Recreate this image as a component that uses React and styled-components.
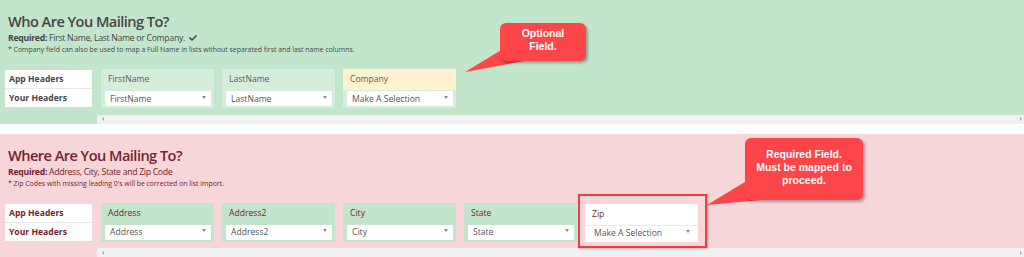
import styled, { createGlobalStyle } from "styled-components";
import { FaCheck } from "react-icons/fa";

const GlobalStyle = createGlobalStyle`
  html, body {
    margin: 0;
    padding: 0;
    background: #ffffff;
  }
  body {
    font-family: "Open Sans", "Liberation Sans", sans-serif;
    width: 1024px;
    height: 257px;
    overflow: hidden;
  }
`;

const Page = styled.div`
  position: relative;
  width: 1024px;
  height: 257px;
  display: flex;
  flex-direction: column;
  gap: 10px;
`;

const Section = styled.section`
  background: ${(p) => (p.danger ? "#f6d6d9" : "#c3e5cb")};
  color: ${(p) => (p.danger ? "#74242b" : "#454545")};
  display: flex;
  flex-direction: column;
  padding-top: 12px;
`;

const Intro = styled.div`
  padding-left: 8px;
`;

const Title = styled.h2`
  margin: 0;
  font-size: 14.6px;
  line-height: 19px;
  font-weight: 600;
  letter-spacing: -0.55px;
`;

const Required = styled.div`
  margin-top: 1px;
  font-size: 8.7px;
  line-height: 12px;
  letter-spacing: -0.3px;
  display: flex;
  align-items: center;
  gap: 4px;

  b {
    font-weight: 700;
  }
`;

const Note = styled.div`
  font-size: 6.9px;
  line-height: 10px;
  margin-top: 1px;
`;

const Row = styled.div`
  display: flex;
  align-items: flex-start;
  padding-left: 5px;
  margin-top: 14px;
  height: 39px;
`;

const Labels = styled.div`
  width: 87px;
  background: #ffffff;
  display: flex;
  flex-direction: column;
  margin-top: 1px;
  margin-right: 9px;
`;

const LabelCell = styled.div`
  height: 18px;
  line-height: 18px;
  padding-left: 4px;
  font-size: 8.6px;
  font-weight: 700;
  & + & {
    border-top: 1px solid #e8e8e8;
  }
`;

const Cards = styled.div`
  display: flex;
  gap: 8px;
`;

const Card = styled.div`
  width: 113px;
  height: ${(p) => (p.tall ? 38 : 39)}px;
  box-sizing: border-box;
  background: ${(p) => p.bg};
  display: flex;
  flex-direction: column;
  padding: 0 3px 2px 4px;
  margin-top: ${(p) => (p.tall ? 1 : 0)}px;
`;

const CardHead = styled.div`
  height: 21px;
  line-height: 21px;
  font-size: 8.6px;
  color: ${(p) => p.color};
  background: ${(p) => p.headBg || "transparent"};
  margin: 0 -3px 0 -4px;
  padding-left: 7px;
  border-bottom: ${(p) => (p.line ? "1px solid #ececec" : "none")};
`;

const Select = styled.div`
  flex: 1;
  background: #ffffff;
  display: flex;
  align-items: center;
  justify-content: space-between;
  padding: 0 5px;
  font-size: 8.6px;
  color: #555555;
  margin-top: 1px;

  &::after {
    content: "";
    border-left: 2.5px solid transparent;
    border-right: 2.5px solid transparent;
    border-top: 3px solid #8a8a8a;
    margin-top: -3px;
  }
`;

const ScrollBar = styled.div`
  margin-top: auto;
  margin-left: 97px;
  height: 9px;
  background: #f1f1f1;
  display: flex;
  align-items: center;
  justify-content: space-between;
  padding: 0 2px 0 5px;

  &::before {
    content: "";
    border-top: 2px solid transparent;
    border-bottom: 2px solid transparent;
    border-right: 2px solid #a8a8a8;
  }
  &::after {
    content: "";
    border-top: 2px solid transparent;
    border-bottom: 2px solid transparent;
    border-left: 2px solid #a8a8a8;
  }
`;

const Highlight = styled.div`
  position: absolute;
  left: 578px;
  top: 194px;
  width: 129px;
  height: 54px;
  box-sizing: border-box;
  border: 2px solid #ec3f42;
  box-shadow: 1px 1px 2px rgba(0, 0, 0, 0.25);
`;

const Callout = styled.div`
  position: absolute;
  left: ${(p) => p.x}px;
  top: ${(p) => p.y}px;
  width: ${(p) => p.w}px;
  height: ${(p) => p.h}px;
  box-sizing: border-box;
  background: #fe4547;
  border-radius: 6px;
  box-shadow: 2px 2px 3px rgba(0, 0, 0, 0.3);
  color: #ffffff;
  font-family: "Liberation Sans", Arial, sans-serif;
  font-weight: 700;
  font-size: 10.5px;
  line-height: 13px;
  text-align: center;
  display: flex;
  align-items: center;
  justify-content: center;
  padding-bottom: 4px;
`;

const Tail = styled.svg`
  position: absolute;
  left: 0;
  top: 0;
  overflow: visible;
  pointer-events: none;
`;

const topFields = [
  { head: "FirstName", value: "FirstName" },
  { head: "LastName", value: "LastName" },
  { head: "Company", value: "Make A Selection", optional: true },
];

const bottomFields = [
  { head: "Address", value: "Address" },
  { head: "Address2", value: "Address2" },
  { head: "City", value: "City" },
  { head: "State", value: "State" },
  { head: "Zip", value: "Make A Selection", missing: true },
];

const HeaderLabels = () => (
  <Labels>
    <LabelCell>App Headers</LabelCell>
    <LabelCell>Your Headers</LabelCell>
  </Labels>
);

const App = () => {
  return (
    <Page>
      <GlobalStyle />
      <Section style={{ height: 124 }}>
        <Intro>
          <Title>Who Are You Mailing To?</Title>
          <Required>
            <span>
              <b>Required:</b> First Name, Last Name or Company.
            </span>
            <FaCheck size={8} />
          </Required>
          <Note>
            * Company field can also be used to map a Full Name in lists without separated first and last name columns.
          </Note>
        </Intro>
        <Row>
          <HeaderLabels />
          <Cards>
            {topFields.map((f) => (
              <Card key={f.head} bg="#d5eddb">
                <CardHead color="#5b5b5b" headBg={f.optional ? "#fff2cf" : undefined}>
                  {f.head}
                </CardHead>
                <Select>{f.value}</Select>
              </Card>
            ))}
          </Cards>
        </Row>
        <ScrollBar />
      </Section>

      <Section danger style={{ height: 123 }}>
        <Intro>
          <Title>Where Are You Mailing To?</Title>
          <Required>
            <span>
              <b>Required:</b> Address, City, State and Zip Code
            </span>
          </Required>
          <Note>* Zip Codes with missing leading 0's will be corrected on list import.</Note>
        </Intro>
        <Row>
          <HeaderLabels />
          <Cards>
            {bottomFields.map((f) =>
              f.missing ? (
                <Card key={f.head} bg="#ffffff" tall>
                  <CardHead color="#74242b" line>
                    {f.head}
                  </CardHead>
                  <Select>{f.value}</Select>
                </Card>
              ) : (
                <Card key={f.head} bg="#c3e5cb">
                  <CardHead color="#74242b">{f.head}</CardHead>
                  <Select>{f.value}</Select>
                </Card>
              )
            )}
          </Cards>
        </Row>
        <ScrollBar />
      </Section>

      <Highlight />

      <Tail width="1024" height="257">
        <polygon points="503,49 465,72 530,60" fill="#fe4547" />
        <polygon points="748,180 707,205 772,199" fill="#fe4547" />
      </Tail>
      <Callout x={500} y={23} w={86} h={38}>
        Optional
        <br />
        Field.
      </Callout>
      <Callout x={745} y={138} w={118} h={62}>
        Required Field.
        <br />
        Must be mapped to
        <br />
        proceed.
      </Callout>
    </Page>
  );
};

export default App;
